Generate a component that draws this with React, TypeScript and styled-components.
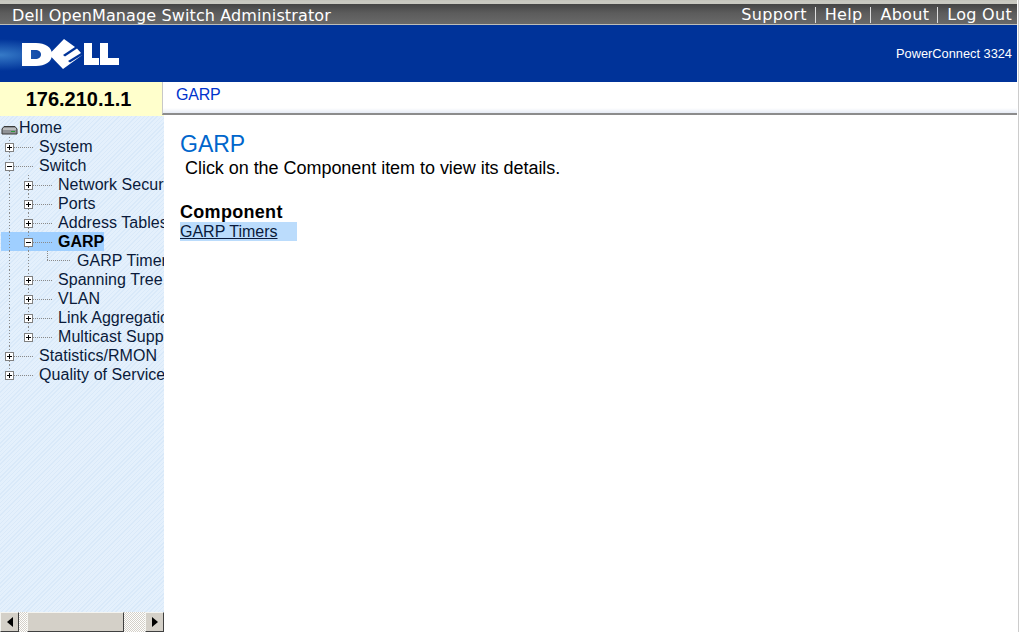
import { createGlobalStyle } from "styled-components"
import styled from "styled-components"

const GlobalStyle = createGlobalStyle`
  html, body {
    margin: 0;
    padding: 0;
    background: #fff;
    overflow: hidden;
  }
`

const Page = styled.div`
  width: 1019px;
  height: 632px;
  display: flex;
  flex-direction: column;
  font-family: "Liberation Sans", Arial, sans-serif;
  box-sizing: border-box;
  border-right: 1px solid #ccc;
  padding-right: 1px;
  overflow: hidden;
`

const TopBar = styled.div`
  height: 25px;
  box-sizing: border-box;
  flex: none;
  display: flex;
  align-items: center;
  justify-content: space-between;
  padding: 5px 5px 0 12px;
  border-top: 1px solid #c4c4bc;
  border-bottom: 1px solid #bdbdb8;
  background: linear-gradient(#c8c8c0 0 3px, #444 3px, #5c5c5c 12px, #696969);
  color: #fff;
  font-family: "DejaVu Sans", sans-serif;
  font-size: 16px;
`

const AppTitle = styled.span`
  letter-spacing: 0.12px;
`

const TopNav = styled.nav`
  display: flex;
  align-items: center;
  letter-spacing: 0.3px;
`

const TopLink = styled.a<{ $first?: boolean }>`
  padding: 0 0 0 ${(p) => (p.$first ? 0 : 9)}px;
  margin-left: ${(p) => (p.$first ? 0 : 8)}px;
  border-left: ${(p) => (p.$first ? "none" : "1px solid #ddd")};
  line-height: 16px;
`

const Banner = styled.div`
  height: 57px;
  flex: none;
  display: flex;
  align-items: center;
  justify-content: space-between;
  padding-right: 5px;
  background:
    radial-gradient(ellipse 60px 16px at 0 30px, rgba(90, 170, 230, 0.6), rgba(0, 51, 153, 0)),
    #003399;
  color: #fff;
  font-size: 12.8px;
`

const Logo = styled.svg`
  width: 130px;
  height: 40px;
  margin-top: -1px;
  flex: none;
`

const Body = styled.div`
  flex: 1;
  min-height: 0;
  display: flex;
`

const Sidebar = styled.aside`
  width: 164px;
  flex: none;
  display: flex;
  flex-direction: column;
`

const IpBox = styled.div`
  height: 34px;
  display: flex;
  align-items: center;
  justify-content: center;
  padding-right: 7px;
  background: #ffffcc;
  color: #000;
  font-size: 20px;
  font-weight: 700;
`

const Tree = styled.div`
  flex: 1;
  min-height: 0;
  padding: 2px 0 0 1px;
  overflow: hidden;
  background:
    repeating-linear-gradient(135deg, #d9e9f9 0 1px, #e4f0fc 1px 3px);
`

const Row = styled.div<{ $selected?: boolean }>`
  height: 19px;
  width: fit-content;
  display: flex;
  align-items: center;
  background: ${(p) => (p.$selected ? "#9fcfff" : "transparent")};
  white-space: nowrap;
`

const Guide = styled.span`
  width: 19px;
  height: 19px;
  flex: none;
  background: repeating-linear-gradient(#8a8a8a 0 1px, transparent 1px 3px) 8px 0 / 1px 100% no-repeat;
`

const ToggleCell = styled.span<{ $last?: boolean }>`
  width: 13px;
  height: 19px;
  flex: none;
  display: flex;
  align-items: center;
  background: repeating-linear-gradient(#8a8a8a 0 1px, transparent 1px 3px) 8px 0 / 1px ${(p) => (p.$last ? "50%" : "100%")} no-repeat;
`

const Toggle = styled.svg`
  width: 9px;
  height: 9px;
  margin: 1px 0 0 4px;
`

const Leader = styled.span`
  width: 19px;
  height: 1px;
  flex: none;
  margin: 1px 6px 0 0;
  background: repeating-linear-gradient(90deg, #8a8a8a 0 1px, transparent 1px 2px);
`

const Elbow = styled.span`
  width: 32px;
  height: 19px;
  flex: none;
  margin-right: 6px;
  background:
    repeating-linear-gradient(#8a8a8a 0 1px, transparent 1px 2px) 8px 0 / 1px 10px no-repeat,
    repeating-linear-gradient(90deg, #8a8a8a 0 1px, transparent 1px 2px) 8px 9px / 24px 1px no-repeat;
`

const HomeIcon = styled.svg`
  width: 17px;
  height: 10px;
  flex: none;
  margin: 4px 1px 0 0;
`

const RowLabel = styled.span<{ $selected?: boolean }>`
  font-size: 16px;
  letter-spacing: ${(p) => (p.$selected ? 0 : 0.05)}px;
  font-weight: ${(p) => (p.$selected ? 700 : 400)};
  color: ${(p) => (p.$selected ? "#000" : "#0a1a3a")};
`

const SideScroll = styled.div`
  height: 20px;
  flex: none;
  display: flex;
  background: conic-gradient(#fff 25%, #d4d0c8 0 50%, #fff 0 75%, #d4d0c8 0) 0 0 / 2px 2px;
`

const ScrollButton = styled.span`
  width: 19px;
  box-sizing: border-box;
  flex: none;
  display: flex;
  align-items: center;
  justify-content: center;
  background: #d4d0c8;
  border: 1px solid;
  border-color: #f4f4f0 #404040 #404040 #f4f4f0;
`

const ScrollThumb = styled.span`
  width: 97px;
  margin: 0 21px 0 8px;
  box-sizing: border-box;
  background: #d4d0c8;
  border: 1px solid;
  border-color: #f4f4f0 #404040 #404040 #f4f4f0;
`

const Arrow = styled.svg`
  width: 6px;
  height: 10px;
`

const Main = styled.main`
  flex: 1;
  min-width: 0;
  display: flex;
  flex-direction: column;
`

const CrumbBar = styled.div`
  height: 33px;
  box-sizing: border-box;
  flex: none;
  margin-left: -2px;
  padding: 4px 0 0 13px;
  border-left: 1px solid #c8c8c8;
  border-bottom: 2px solid #8c8c8c;
  background: linear-gradient(#fff 0 26px, #e6ebf5);
  color: #0033cc;
  font-size: 16px;
  line-height: 18px;
  letter-spacing: -0.2px;
`

const Content = styled.section`
  flex: 1;
  padding: 16px 16px 0;
  background: #fff;
  color: #000;
`

const Title = styled.h1`
  margin: 0;
  font-size: 23px;
  line-height: 27px;
  font-weight: 400;
  color: #0066cc;
`

const Intro = styled.p`
  margin: 0 0 0 5px;
  font-size: 18px;
  line-height: 20px;
  letter-spacing: -0.04px;
`

const ListHeading = styled.div`
  margin-top: 25px;
  font-size: 18px;
  line-height: 19px;
  font-weight: 700;
  letter-spacing: 0.3px;
`

const ListRow = styled.div`
  width: 117px;
  height: 19px;
  background: #bbdcfc;
  font-size: 16px;
  line-height: 19px;
`

const ListLink = styled.a`
  color: #0a1a3a;
  text-decoration: underline;
`

type TreeItem = {
  label: string
  guides: number
  state?: "plus" | "minus"
  last?: boolean
  selected?: boolean
}

const items: TreeItem[] = [
  { label: "System", guides: 0, state: "plus" },
  { label: "Switch", guides: 0, state: "minus" },
  { label: "Network Security", guides: 1, state: "plus" },
  { label: "Ports", guides: 1, state: "plus" },
  { label: "Address Tables", guides: 1, state: "plus" },
  { label: "GARP", guides: 1, state: "minus", selected: true },
  { label: "GARP Timers", guides: 2 },
  { label: "Spanning Tree", guides: 1, state: "plus" },
  { label: "VLAN", guides: 1, state: "plus" },
  { label: "Link Aggregation", guides: 1, state: "plus" },
  { label: "Multicast Support", guides: 1, state: "plus", last: true },
  { label: "Statistics/RMON", guides: 0, state: "plus" },
  { label: "Quality of Service", guides: 0, state: "plus", last: true },
]

function ToggleBox({ state }: { state: "plus" | "minus" }) {
  return (
    <Toggle viewBox="0 0 9 9">
      <rect x="0.5" y="0.5" width="8" height="8" fill="#fff" stroke="#808080" />
      <path d="M2 4.5h5" stroke="#000" />
      {state === "plus" && <path d="M4.5 2v5" stroke="#000" />}
    </Toggle>
  )
}

export default function App() {
  return (
    <Page>
      <GlobalStyle />
      <TopBar>
        <AppTitle>Dell OpenManage Switch Administrator</AppTitle>
        <TopNav>
          <TopLink $first>Support</TopLink>
          <TopLink>Help</TopLink>
          <TopLink>About</TopLink>
          <TopLink>Log Out</TopLink>
        </TopNav>
      </TopBar>
      <Banner>
        <Logo viewBox="0 0 130 40">
          <g fill="#fff">
            <path fillRule="evenodd" d="M22 10h14c9 0 16 4 16 11.5S45 33 36 33H22zM31 17v9h4c4 0 6-2 6-4.500s-2-4.500-6-4.500z" />
            <path d="M49 21.500 64 6 75 14 63 22 65 23.500 77 15.500 81 20 68 28 70 29.500 83 21.500 63 36z" />
            <path d="M84 10h8v15h7v7H84z" />
            <path d="M100 10h8v15h11v7h-19z" />
          </g>
        </Logo>
        <span>PowerConnect 3324</span>
      </Banner>
      <Body>
        <Sidebar>
          <IpBox>176.210.1.1</IpBox>
          <Tree>
            <Row>
              <HomeIcon viewBox="0 0 17 10">
                <path d="M3 1.500h11l2 2.500v5H1V4z" fill="#8f9296" stroke="#3a3a3a" />
                <path d="M2 4h13" stroke="#e4e4e4" />
                <path d="M10 6.500h4" stroke="#2a9a3a" />
              </HomeIcon>
              <RowLabel>Home</RowLabel>
            </Row>
            {items.map((item) => (
              <Row key={item.label} $selected={item.selected}>
                {Array.from({ length: item.guides }, (_, i) => (
                  <Guide key={i} />
                ))}
                {item.state ? (
                  <>
                    <ToggleCell $last={item.last}>
                      <ToggleBox state={item.state} />
                    </ToggleCell>
                    <Leader />
                  </>
                ) : (
                  <Elbow />
                )}
                <RowLabel $selected={item.selected}>{item.label}</RowLabel>
              </Row>
            ))}
          </Tree>
          <SideScroll>
            <ScrollButton>
              <Arrow viewBox="0 0 6 10">
                <path d="M6 0v10L0 5z" fill="#000" />
              </Arrow>
            </ScrollButton>
            <ScrollThumb />
            <ScrollButton>
              <Arrow viewBox="0 0 6 10">
                <path d="M0 0v10l6-5z" fill="#000" />
              </Arrow>
            </ScrollButton>
          </SideScroll>
        </Sidebar>
        <Main>
          <CrumbBar>GARP</CrumbBar>
          <Content>
            <Title>GARP</Title>
            <Intro>Click on the Component item to view its details.</Intro>
            <ListHeading>Component</ListHeading>
            <ListRow>
              <ListLink>GARP Timers</ListLink>
            </ListRow>
          </Content>
        </Main>
      </Body>
    </Page>
  )
}
